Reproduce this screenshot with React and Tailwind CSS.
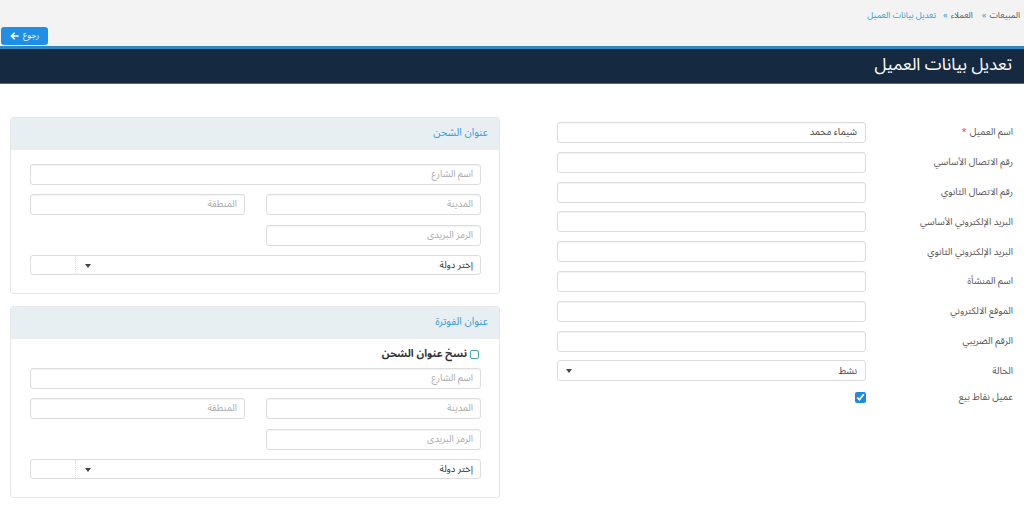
import React from "react";

const fontStack = { fontFamily: '"Noto Sans Arabic", "DejaVu Sans", "Liberation Sans", sans-serif' };

function Field({ label, required, value, children }) {
  return (
    <div className="flex items-center h-[21px] mb-[8.8px]">
      <div className="w-[148px] pr-[1px] text-[9.5px] text-[#555]">
        {label}
        {required && <span className="text-[#e74c3c] mr-[3px]">*</span>}
      </div>
      <div className="w-[309px] h-full">
        {children || (
          <div className="h-full border border-[#dcdcdc] rounded-[3px] shadow-[inset_0_1px_1px_rgba(0,0,0,0.05)] bg-white px-[8px] flex items-center text-[9.5px] text-[#444]">
            {value}
          </div>
        )}
      </div>
    </div>
  );
}

function Input({ placeholder, className = "" }) {
  return (
    <div className={"h-[21px] border border-[#dcdcdc] rounded-[3px] shadow-[inset_0_1px_1px_rgba(0,0,0,0.05)] bg-white px-[7px] flex items-center text-[9.5px] text-[#aaa] " + className}>
      {placeholder}
    </div>
  );
}

function Caret() {
  return <span className="inline-block w-0 h-0 border-l-[3px] border-r-[3px] border-t-[4px] border-l-transparent border-r-transparent border-t-[#444]" />;
}

function CountrySelect() {
  return (
    <div className="h-[20px] border border-[#dcdcdc] rounded-[3px] bg-white flex text-[9.5px] text-[#333]">
      <div className="flex-1 flex items-center justify-between px-[7px]">
        <span>إختر دولة</span>
        <span className="ml-[2px]"><Caret /></span>
      </div>
      <div className="w-[45px] border-r border-dotted border-[#ddd]" />
    </div>
  );
}

function Panel({ title, copy }) {
  return (
    <div className="border border-[#e6e6e6] rounded-[3px] bg-white">
      <div className="h-[32px] bg-[#e8eff2] flex items-center px-[11px] text-[10.5px] text-[#3a9ad9] rounded-t-[3px]">
        {title}
      </div>
      <div className={"pr-[18px] pl-[19px] pb-[18px] " + (copy ? "pt-[8px]" : "pt-[14px]")}>
        {copy && (
          <label className="flex items-center gap-[3px] mb-[5px] pr-[2px] text-[10.5px] font-bold text-[#333]">
            <span className="w-[9px] h-[9px] border border-[#4aa89a] rounded-[2px] bg-white" />
            نسخ عنوان الشحن
          </label>
        )}
        <Input placeholder="اسم الشارع" />
        <div className="flex justify-between mt-[9px]">
          <Input placeholder="المدينة" className="w-[215px]" />
          <Input placeholder="المنطقة" className="w-[215px]" />
        </div>
        <div className="flex mt-[10px]">
          <Input placeholder="الرمز البريدى" className="w-[215px]" />
        </div>
        <div className="mt-[9px]">
          <CountrySelect />
        </div>
      </div>
    </div>
  );
}

export default function App() {
  return (
    <div dir="rtl" className="w-[1024px] h-[516px] overflow-hidden bg-white" style={fontStack}>
      {/* top bar: breadcrumb + back button */}
      <div className="bg-[#f3f3f3] h-[46px]">
        <div className="flex items-center gap-[3px] pr-[4px] pt-[9px] text-[8.5px]">
          <span className="text-[#555]">المبيعات</span>
          <span className="text-[#2a9fd6] text-[9px]">»</span>
          <span className="text-[#555] mr-[6px]">العملاء</span>
          <span className="text-[#2a9fd6] text-[9px]">»</span>
          <span className="text-[#2a9fd6] mr-[4px]">تعديل بيانات العميل</span>
        </div>
        <div className="flex justify-end pl-[1px] mt-[4px]">
          <button className="h-[18px] w-[47px] bg-[#1f8fe5] rounded-[3px] text-white text-[8.5px] flex items-center justify-center gap-[4px]">
            رجوع
            <svg width="9" height="8" viewBox="0 0 10 9" fill="white">
              <path d="M4.6 0.3 L0.3 4.5 L4.6 8.7 L5.8 7.5 L3.6 5.4 H9.7 V3.6 H3.6 L5.8 1.5 Z" />
            </svg>
          </button>
        </div>
      </div>

      {/* title bar */}
      <div className="h-[38px] bg-[#152a40] border-t-[3px] border-[#2f86c0] border-b border-b-[#5b6b7a] flex items-center pr-[12px]">
        <h1 className="text-white text-[17px] font-normal">تعديل بيانات العميل</h1>
      </div>

      {/* content */}
      <div className="flex justify-between px-[10px]">
        <div className="w-[460px] pt-[38px]">
          <Field label="اسم العميل" required value="شيماء محمد" />
          <Field label="رقم الاتصال الأساسي" />
          <Field label="رقم الاتصال الثانوي" />
          <Field label="البريد الإلكتروني الأساسي" />
          <Field label="البريد الإلكتروني الثانوي" />
          <Field label="اسم المنشأة" />
          <Field label="الموقع الالكتروني" />
          <Field label="الرقم الضريبي" />
          <Field label="الحالة">
            <div className="h-full border border-[#dcdcdc] rounded-[3px] bg-white px-[8px] flex items-center justify-between text-[9.5px] text-[#444]">
              <span>نشط</span>
              <Caret />
            </div>
          </Field>
          <div className="flex items-center h-[14px] mt-[3px]">
            <div className="w-[148px] pr-[1px] text-[9.5px] text-[#555]">عميل نقاط بيع</div>
            <input type="checkbox" defaultChecked className="w-[11px] h-[11px] m-0 accent-[#1e88e5]" />
          </div>
        </div>

        <div className="w-[490px] pt-[33px] flex flex-col gap-[12px]">
          <Panel title="عنوان الشحن" />
          <Panel title="عنوان الفوترة" copy />
        </div>
      </div>
    </div>
  );
}
